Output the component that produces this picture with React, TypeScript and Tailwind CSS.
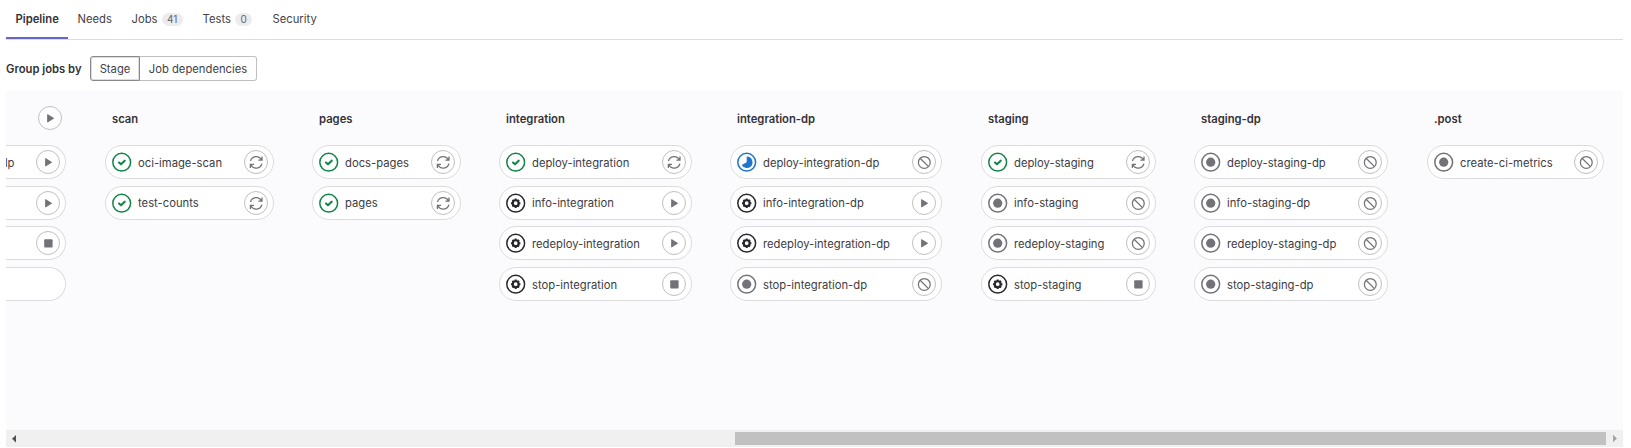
import React from "react";
import clsx from "clsx";

type Status = "success" | "manual" | "created" | "running";
type Action = "retry" | "play" | "stop" | "cancel";
type Job = { name: string; status: Status; action: Action };
type Stage = { name: string; box: string; jobs: Job[] };

const job = (name: string, status: Status, action: Action): Job => ({ name, status, action });

const stages: Stage[] = [
  {
    name: "scan",
    box: "ml-[39px] w-[169px]",
    jobs: [job("oci-image-scan", "success", "retry"), job("test-counts", "success", "retry")],
  },
  {
    name: "pages",
    box: "ml-[38px] w-[149px]",
    jobs: [job("docs-pages", "success", "retry"), job("pages", "success", "retry")],
  },
  {
    name: "integration",
    box: "ml-[38px] w-[193px]",
    jobs: [
      job("deploy-integration", "success", "retry"),
      job("info-integration", "manual", "play"),
      job("redeploy-integration", "manual", "play"),
      job("stop-integration", "manual", "stop"),
    ],
  },
  {
    name: "integration-dp",
    box: "ml-[38px] w-[212px]",
    jobs: [
      job("deploy-integration-dp", "running", "cancel"),
      job("info-integration-dp", "manual", "play"),
      job("redeploy-integration-dp", "manual", "play"),
      job("stop-integration-dp", "created", "cancel"),
    ],
  },
  {
    name: "staging",
    box: "ml-[39px] w-[175px]",
    jobs: [
      job("deploy-staging", "success", "retry"),
      job("info-staging", "created", "cancel"),
      job("redeploy-staging", "created", "cancel"),
      job("stop-staging", "manual", "stop"),
    ],
  },
  {
    name: "staging-dp",
    box: "ml-[38px] w-[194px]",
    jobs: [
      job("deploy-staging-dp", "created", "cancel"),
      job("info-staging-dp", "created", "cancel"),
      job("redeploy-staging-dp", "created", "cancel"),
      job("stop-staging-dp", "created", "cancel"),
    ],
  },
  {
    name: ".post",
    box: "ml-[39px] w-[177px]",
    jobs: [job("create-ci-metrics", "created", "cancel")],
  },
];

const statusColor: Record<Status, string> = {
  success: "text-[#108548]",
  manual: "text-[#28272d]",
  created: "text-[#737278]",
  running: "text-[#1f75cb]",
};

function StatusIcon({ status }: { status: Status }) {
  return (
    <svg viewBox="0 0 20 20" className={clsx("size-5 shrink-0", statusColor[status])} fill="none">
      <circle cx="9.7" cy="10.2" r="8.9" stroke="currentColor" strokeWidth="1.5" />
      {status === "success" && (
        <path d="M7 10.5 9 12.3 12.7 8.7" stroke="currentColor" strokeWidth="2.1" strokeLinecap="round" strokeLinejoin="round" />
      )}
      {status === "created" && <circle cx="9.7" cy="10.2" r="4.6" fill="currentColor" />}
      {status === "running" && (
        <path d="M9.7 4.4A5.8 5.8 0 1 1 4.7 13.1L9.7 10.2Z" fill="currentColor" />
      )}
      {status === "manual" && (
        <g transform="translate(-.3 .2)">
          <circle cx="10" cy="10" r="2.9" stroke="currentColor" strokeWidth="2.1" />
          <path
            d="M10 5.3v1.5M10 13.2v1.5M5.3 10h1.5M13.2 10h1.5M6.7 6.7l1 1M12.3 12.3l1 1M6.7 13.3l1-1M12.3 7.7l1-1"
            stroke="currentColor"
            strokeWidth="2"
          />
        </g>
      )}
    </svg>
  );
}

function ActionButton({ action }: { action: Action }) {
  return (
    <button className="flex size-6 shrink-0 items-center justify-center rounded-full border border-[#bfbfc3] bg-white text-[#737278]">
      <svg viewBox="0 0 14 14" className="size-3.5 shrink-0" fill="none">
        {action === "play" && (
          <path d="M4.6 3.6v7.4L10.6 7.3Z" fill="currentColor" stroke="currentColor" strokeWidth=".9" strokeLinejoin="round" />
        )}
        {action === "stop" && <rect x="3.2" y="3.2" width="8.4" height="8.2" rx="1" fill="currentColor" />}
        {action === "cancel" && (
          <>
            <circle cx="7.3" cy="7.4" r="5.9" stroke="currentColor" strokeWidth="1.25" />
            <path d="m3.1 3.2 8.4 8.4" stroke="currentColor" strokeWidth="1.25" />
          </>
        )}
        {action === "retry" && (
          <path
            d="M1.5 6A5.8 5.8 0 0 1 12.4 4.9M13 1.6V5.2H9.4M12.9 8.6A5.8 5.8 0 0 1 2 9.7M1.4 13V9.4H5"
            stroke="currentColor"
            strokeWidth="1.3"
          />
        )}
      </svg>
    </button>
  );
}

function StageColumn({ stage }: { stage: Stage }) {
  return (
    <section className={clsx("shrink-0", stage.box)}>
      <h2 className="flex h-[54px] items-center pt-px pl-[7px] font-semibold">{stage.name}</h2>
      <ul className="flex flex-col gap-[6.7px]">
        {stage.jobs.map((j) => (
          <li
            key={j.name}
            className="flex h-[34px] items-center rounded-full border border-[#dcdcde] bg-white pr-[5px] pl-[6px]"
          >
            <StatusIcon status={j.status} />
            <span className="ml-1.5 flex-1 pt-px whitespace-nowrap text-[#3d3c42]">{j.name}</span>
            <ActionButton action={j.action} />
          </li>
        ))}
      </ul>
    </section>
  );
}

const clippedJobs: { label?: string; action?: Action }[] = [
  { label: "dp", action: "play" },
  { action: "play" },
  { action: "stop" },
  {},
];

function ClippedColumn() {
  return (
    <section className="w-[60px] shrink-0">
      <div className="flex h-[54px] items-center justify-end pr-1">
        <ActionButton action="play" />
      </div>
      <ul className="flex flex-col gap-[6.7px]">
        {clippedJobs.map((j, i) => (
          <li
            key={i}
            className="flex h-[34px] items-center justify-between rounded-r-full border border-l-0 border-[#dcdcde] bg-white pr-[5px]"
          >
            <span className="flex w-[8.5px] justify-end overflow-hidden pt-px text-[#3d3c42]">{j.label}</span>
            {j.action && <ActionButton action={j.action} />}
          </li>
        ))}
      </ul>
    </section>
  );
}

const tabs: { name: string; box: string; count?: number }[] = [
  { name: "Pipeline", box: "w-[62px]" },
  { name: "Needs", box: "w-[54px]" },
  { name: "Jobs", box: "w-[71px]", count: 41 },
  { name: "Tests", box: "w-[70px]", count: 0 },
  { name: "Security", box: "w-[63px]" },
];

export default function App() {
  return (
    <main className="flex h-[448px] w-[1631px] flex-col overflow-hidden bg-white pr-2 pl-1.5 font-['Inter',sans-serif] text-[11.25px] leading-4 text-[#333238]">
      <nav className="flex h-10 shrink-0 border-b border-[#dcdcde]">
        {tabs.map((t, i) => (
          <a
            key={t.name}
            className={clsx(
              "flex h-[39px] items-center gap-1 pl-[9.5px] whitespace-nowrap",
              t.box,
              i === 0 ? "border-b-2 border-[#6666c4] pt-px font-semibold" : "pb-px text-[#434248]",
            )}
          >
            {t.name}
            {t.count !== undefined && (
              <span className="rounded-full bg-[#ececef] px-[5.5px] text-[10px] leading-[13px] text-[#626168]">{t.count}</span>
            )}
          </a>
        ))}
      </nav>
      <div className="flex h-[51px] shrink-0 items-center pt-1.5">
        <span className="w-[84px] font-semibold whitespace-nowrap">Group jobs by</span>
        <div className="flex h-[25px] text-[#434248]">
          <button className="w-[50px] rounded-l-[3px] border border-[#89888d] shadow-[inset_0_0_0_1px_#dcdcde]">Stage</button>
          <button className="w-[117px] rounded-r-[3px] border border-l-0 border-[#bfbfc3] whitespace-nowrap">
            Job dependencies
          </button>
        </div>
      </div>
      <div className="flex h-[339px] shrink-0 overflow-hidden bg-[#fbfafd]">
        <ClippedColumn />
        {stages.map((s) => (
          <StageColumn key={s.name} stage={s} />
        ))}
      </div>
      <div className="flex h-[17px] shrink-0 items-center justify-between bg-[#f0f0f0]">
        <svg viewBox="0 0 17 17" className="size-[17px]">
          <path d="M10 5v7.4L6 8.7Z" fill="#505050" />
        </svg>
        <div className="flex">
          <div className="h-[13px] w-[871px] bg-[#c1c1c1]" />
          <svg viewBox="0 0 17 13" className="h-[13px] w-[17px]">
            <path d="M7 2.8v7.4l4-3.7Z" fill="#a3a3a3" />
          </svg>
        </div>
      </div>
    </main>
  );
}
